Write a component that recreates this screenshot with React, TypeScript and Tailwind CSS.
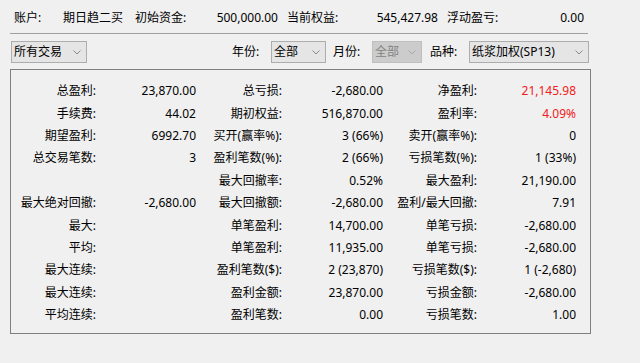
import React from "react";

const FONT = { fontFamily: '"Noto Sans", "Noto Sans CJK SC", sans-serif' };

function Chevron({ color = "#8a8a8a" }: { color?: string }) {
  return (
    <svg width="8" height="5" viewBox="0 0 8 5" className="shrink-0">
      <path d="M0.5 0.5 L4 4 L7.5 0.5" fill="none" stroke={color} strokeWidth="1" />
    </svg>
  );
}

function Select({
  w,
  text,
  disabled,
}: {
  w: string;
  text: string;
  disabled?: boolean;
}) {
  return (
    <div
      className={`${w} h-[22px] flex items-center justify-between pl-[2px] pr-[5px] border ${
        disabled
          ? "bg-[#cccccc] border-[#bfbfbf] text-[#838383]"
          : "bg-[#e5e5e5] border-[#adadad] text-black"
      }`}
    >
      <span>{text}</span>
      <Chevron color={disabled ? "#a8a8a8" : "#8a8a8a"} />
    </div>
  );
}

type Cell = { t: string; red?: boolean };
const rows: [string, string, string, string, string, Cell][] = [
  ["总盈利:", "23,870.00", "总亏损:", "-2,680.00", "净盈利:", { t: "21,145.98", red: true }],
  ["手续费:", "44.02", "期初权益:", "516,870.00", "盈利率:", { t: "4.09%", red: true }],
  ["期望盈利:", "6992.70", "买开(赢率%):", "3 (66%)", "卖开(赢率%):", { t: "0" }],
  ["总交易笔数:", "3", "盈利笔数(%):", "2 (66%)", "亏损笔数(%):", { t: "1 (33%)" }],
  ["", "", "最大回撤率:", "0.52%", "最大盈利:", { t: "21,190.00" }],
  ["最大绝对回撤:", "-2,680.00", "最大回撤额:", "-2,680.00", "盈利/最大回撤:", { t: "7.91" }],
  ["最大:", "", "单笔盈利:", "14,700.00", "单笔亏损:", { t: "-2,680.00" }],
  ["平均:", "", "单笔盈利:", "11,935.00", "单笔亏损:", { t: "-2,680.00" }],
  ["最大连续:", "", "盈利笔数($):", "2 (23,870)", "亏损笔数($):", { t: "1 (-2,680)" }],
  ["最大连续:", "", "盈利金额:", "23,870.00", "亏损金额:", { t: "-2,680.00" }],
  ["平均连续:", "", "盈利笔数:", "0.00", "亏损笔数:", { t: "1.00" }],
];

export default function App() {
  return (
    <div
      className="w-[640px] h-[363px] bg-[#f0f0f0] text-[12px] leading-[16px] text-black overflow-hidden"
      style={FONT}
    >
      {/* top info row */}
      <div className="flex pt-[10px] pl-[14px] h-[26px]">
        <div className="w-[49px]">账户:</div>
        <div className="w-[72px]">期日趋二买</div>
        <div className="w-[143px] flex justify-between">
          <span>初始资金:</span>
          <span>500,000.00</span>
        </div>
        <div className="w-[151px] ml-[9px] flex justify-between">
          <span>当前权益:</span>
          <span>545,427.98</span>
        </div>
        <div className="w-[137px] ml-[9px] flex justify-between">
          <span>浮动盈亏:</span>
          <span>0.00</span>
        </div>
      </div>
      <div className="mt-[7px] ml-[10px] w-[578px] border-t border-[#a0a0a0]" />

      {/* filter row */}
      <div className="mt-[7px] flex items-center h-[22px]">
        <div className="ml-[11px]">
          <Select w="w-[76px]" text="所有交易" />
        </div>
        <span className="ml-[145px] w-[39px]">年份:</span>
        <Select w="w-[55px]" text="全部" />
        <span className="ml-[7px] w-[39px]">月份:</span>
        <Select w="w-[50px]" text="全部" disabled />
        <span className="ml-[8px] w-[39px]">品种:</span>
        <Select w="w-[120px]" text="纸浆加权(SP13)" />
      </div>

      {/* stats panel */}
      <div className="mt-[6px] ml-[10px] w-[581px] h-[265px] border border-[#7f7f7f] pt-[10px]">
        <div className="grid grid-cols-[85px_100px_86px_101px_94px_99px] auto-rows-[22.4px]">
          {rows.map((r, i) => (
            <React.Fragment key={i}>
              <div className="text-right self-center whitespace-nowrap">{r[0]}</div>
              <div className="text-right self-center whitespace-nowrap">{r[1]}</div>
              <div className="text-right self-center whitespace-nowrap">{r[2]}</div>
              <div className="text-right self-center whitespace-nowrap">{r[3]}</div>
              <div className="text-right self-center whitespace-nowrap">{r[4]}</div>
              <div
                className={`text-right self-center whitespace-nowrap ${
                  r[5].red ? "text-[#f01b1b]" : ""
                }`}
              >
                {r[5].t}
              </div>
            </React.Fragment>
          ))}
        </div>
      </div>
    </div>
  );
}
